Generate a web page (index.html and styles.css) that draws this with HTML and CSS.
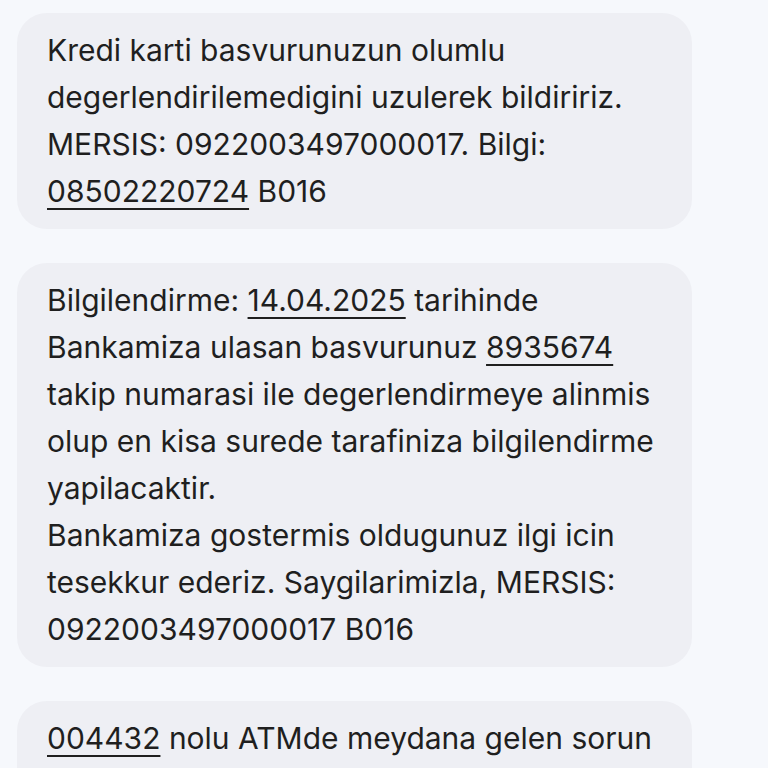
FILE: index.html
```html
<!DOCTYPE html>
<html lang="tr">
<head>
  <meta charset="UTF-8" />
  <meta name="viewport" content="width=device-width, initial-scale=1" />
  <title>Mesajlar</title>
  <link rel="stylesheet" href="styles.css">
</head>
<body>

  <!-- message list -->
  <div class="thread">
    <div class="bubble">
      Kredi karti basvurunuzun olumlu<br>
      degerlendirilemedigini uzulerek bildiririz.<br>
      MERSIS: 0922003497000017. Bilgi:<br>
      <span class="link">08502220724</span> B016
    </div>

    <div class="bubble">
      Bilgilendirme: <span class="link">14.04.2025</span> tarihinde<br>
      Bankamiza ulasan basvurunuz <span class="link">8935674</span><br>
      takip numarasi ile degerlendirmeye alinmis<br>
      olup en kisa surede tarafiniza bilgilendirme<br>
      yapilacaktir.<br>
      Bankamiza gostermis oldugunuz ilgi icin<br>
      tesekkur ederiz. Saygilarimizla, MERSIS:<br>
      0922003497000017 B016
    </div>

    <div class="bubble">
      <span class="link">004432</span> nolu ATMde meydana gelen sorun
    </div>
  </div>

</body>
</html>
```

FILE: styles.css
```css
* {
  margin: 0;
  padding: 0;
  box-sizing: border-box;
}

html, body {
  height: 100%;
  overflow: hidden;
  background: #f6f8fc;
  font-family: Inter, "Open Sans", sans-serif;
}

.thread {
  display: flex;
  flex-direction: column;
  align-items: flex-start;
  gap: 34px;
  padding: 13px 0 0 17px;
}

.bubble {
  width: 675px;
  background: #eeeff4;
  border-radius: 30px;
  padding: 14px 20px 14px 30px;
  font-size: 30px;
  line-height: 47px;
  color: #1f1f1f;
}

.bubble:last-child {
  padding-bottom: 40px;
}

.link {
  text-decoration: underline;
  text-decoration-thickness: 2px;
  text-underline-offset: 6px;
}
```
